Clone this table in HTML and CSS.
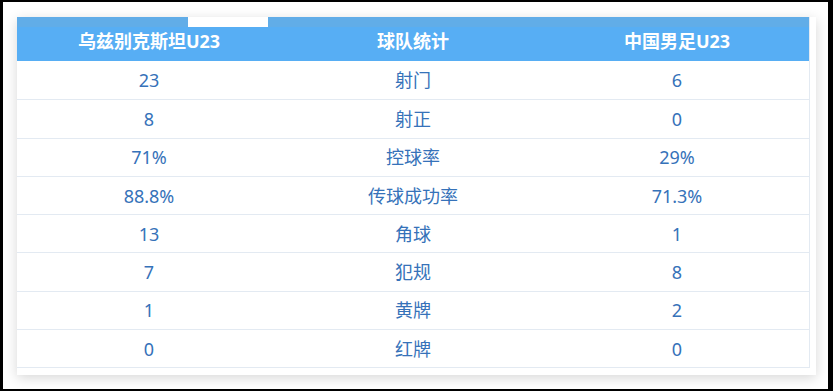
FILE: index.html
```html
<!DOCTYPE html>
<html lang="zh-CN">
<head>
<meta charset="utf-8">
<title>球队统计</title>
<link rel="stylesheet" href="styles.css">
</head>
<body>
<div class="frame">
  <div class="card">
    <div class="table">
      <div class="head">
        <div class="band"><span class="tab"></span></div>
        <div class="row head-row">
          <div class="cell">乌兹别克斯坦U23</div>
          <div class="cell">球队统计</div>
          <div class="cell">中国男足U23</div>
        </div>
      </div>
      <div class="row"><div class="cell">23</div><div class="cell">射门</div><div class="cell">6</div></div>
      <div class="row"><div class="cell">8</div><div class="cell">射正</div><div class="cell">0</div></div>
      <div class="row"><div class="cell">71%</div><div class="cell">控球率</div><div class="cell">29%</div></div>
      <div class="row"><div class="cell">88.8%</div><div class="cell">传球成功率</div><div class="cell">71.3%</div></div>
      <div class="row"><div class="cell">13</div><div class="cell">角球</div><div class="cell">1</div></div>
      <div class="row"><div class="cell">7</div><div class="cell">犯规</div><div class="cell">8</div></div>
      <div class="row"><div class="cell">1</div><div class="cell">黄牌</div><div class="cell">2</div></div>
      <div class="row"><div class="cell">0</div><div class="cell">红牌</div><div class="cell">0</div></div>
    </div>
  </div>
</div>
</body>
</html>
```
FILE: styles.css
```css
* { box-sizing: border-box; }
html, body { margin: 0; padding: 0; background: #fff; }
body {
  font-family: "Noto Sans", "Noto Sans CJK SC", sans-serif;
}
.frame {
  width: 833px;
  height: 391px;
  border-style: solid;
  border-color: #000;
  border-width: 2px 5px 2px 3px;
  padding: 15px 0 0 14px;
  background: #fff;
}
.card {
  width: 799px;
  height: 358px;
  background: #fff;
  box-shadow: 0 3px 12px rgba(0, 0, 0, 0.16);
  padding: 0 6px 7px 0;
}
.table {
  width: 793px;
  border-right: 1px solid #e3eaf2;
  border-bottom: 1px solid #e3eaf2;
}
.head {
  position: relative;
  height: 44px;
  background: #57aef4;
}
.band {
  position: absolute;
  left: 0;
  top: 0;
  right: 0;
  height: 10px;
  background: #61ade8;
}
.tab {
  position: absolute;
  left: 171px;
  top: 0;
  width: 80px;
  height: 10px;
  background: #fff;
}
.row {
  display: grid;
  grid-template-columns: 1fr 1fr 1fr;
  height: 38.3px;
  border-top: 1px solid #e3eaf2;
  align-items: center;
  color: #3672b9;
  font-size: 18px;
}
.head + .row { border-top: none; }
.head-row {
  position: relative;
  height: 44px;
  border-top: none;
  color: #fff;
  font-weight: 700;
  font-size: 18px;
  padding-top: 4px;
}
.cell {
  text-align: center;
  line-height: 1;
}
```
